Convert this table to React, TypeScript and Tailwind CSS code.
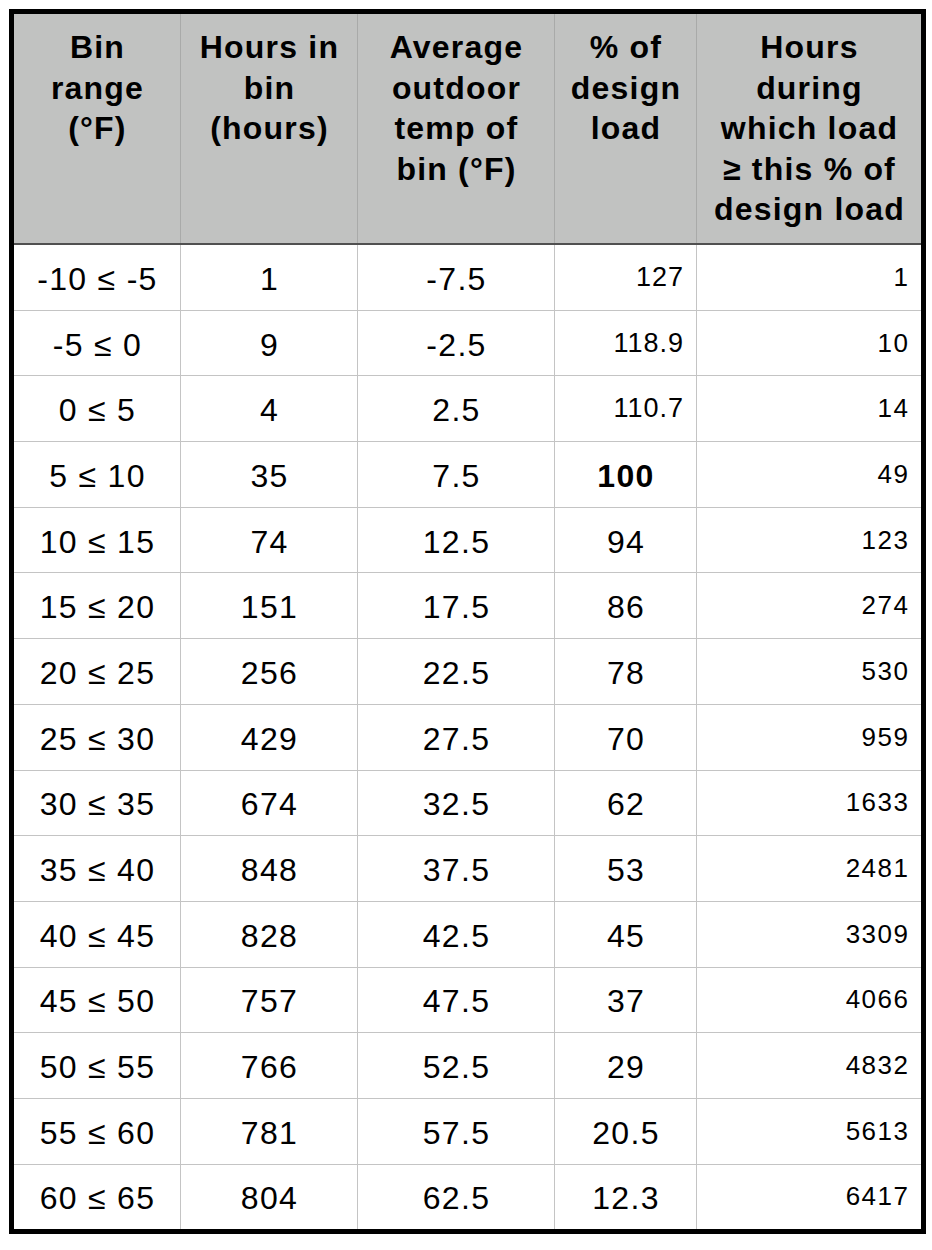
const headers = [
  ["Bin", "range", "(°F)"],
  ["Hours in", "bin", "(hours)"],
  ["Average", "outdoor", "temp of", "bin (°F)"],
  ["% of", "design", "load"],
  ["Hours", "during", "which load", "≥ this % of", "design load"],
];

// range, hours, avg temp, % of design load, hours >= this %
const rows: [string, string, string, string, string][] = [
  ["-10 ≤ -5", "1", "-7.5", "127", "1"],
  ["-5 ≤ 0", "9", "-2.5", "118.9", "10"],
  ["0 ≤ 5", "4", "2.5", "110.7", "14"],
  ["5 ≤ 10", "35", "7.5", "100", "49"],
  ["10 ≤ 15", "74", "12.5", "94", "123"],
  ["15 ≤ 20", "151", "17.5", "86", "274"],
  ["20 ≤ 25", "256", "22.5", "78", "530"],
  ["25 ≤ 30", "429", "27.5", "70", "959"],
  ["30 ≤ 35", "674", "32.5", "62", "1633"],
  ["35 ≤ 40", "848", "37.5", "53", "2481"],
  ["40 ≤ 45", "828", "42.5", "45", "3309"],
  ["45 ≤ 50", "757", "47.5", "37", "4066"],
  ["50 ≤ 55", "766", "52.5", "29", "4832"],
  ["55 ≤ 60", "781", "57.5", "20.5", "5613"],
  ["60 ≤ 65", "804", "62.5", "12.3", "6417"],
];

const cols = "grid-cols-[166px_176px_196px_141px_224px]";
const mid = "bg-white flex items-center justify-center pt-[3px] pl-[1px] text-[32px] tracking-[1.3px]";

export default function App() {
  return (
    <div className="bg-white w-[932px] h-[1250px] pt-[9px] pl-[9px] font-['Liberation_Sans',Arial,sans-serif] text-black">
      <div className="w-[917px] border-[5px] border-black">
        <div className={`grid ${cols} gap-x-px bg-[#a9aaa9] border-b-2 border-[#505050]`}>
          {headers.map((lines, i) => (
            <div
              key={i}
              className="bg-[#c1c2c1] h-[229px] pt-[13px] pl-[1px] text-center font-bold text-[32px] leading-[40.5px] tracking-[1.2px]"
            >
              {lines.map((l) => (
                <div key={l} className="whitespace-nowrap">{l}</div>
              ))}
            </div>
          ))}
        </div>

        <div className={`grid ${cols} auto-rows-[64.7px] gap-px bg-[#c4c4c4]`}>
          {rows.map((r, ri) => (
            <div key={ri} className="contents">
              <div className={mid}>{r[0]}</div>
              <div className={mid}>{r[1]}</div>
              <div className={mid}>{r[2]}</div>
              {ri < 3 ? (
                <div className="bg-white flex items-center justify-end pr-[12px] text-[27px] tracking-[1px]">{r[3]}</div>
              ) : ri === 3 ? (
                <div className={`${mid} font-bold`}>{r[3]}</div>
              ) : (
                <div className={mid}>{r[3]}</div>
              )}
              <div className="bg-white flex items-center justify-end pr-[11.5px] text-[26px] tracking-[1.5px]">{r[4]}</div>
            </div>
          ))}
        </div>
      </div>
    </div>
  );
}
